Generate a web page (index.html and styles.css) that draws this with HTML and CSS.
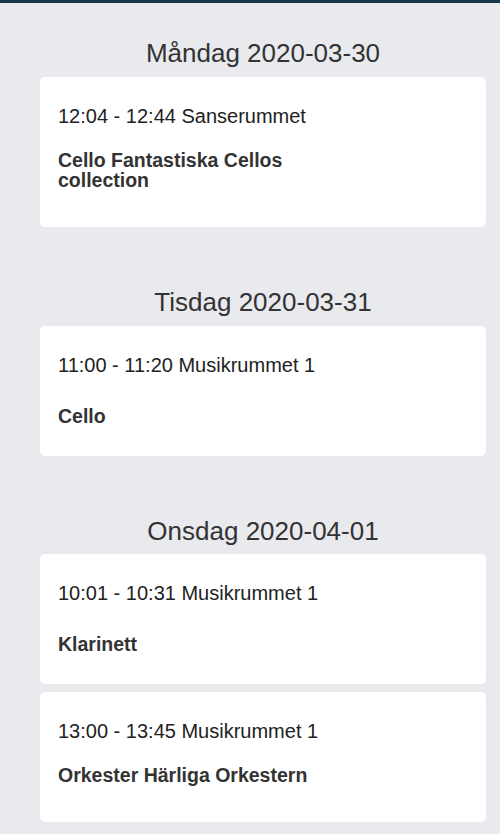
FILE: index.html
```html
<!DOCTYPE html>
<html lang="sv">
<head>
<meta charset="utf-8">
<title>Schema</title>
<link rel="stylesheet" href="styles.css">
</head>
<body>
<div class="topbar"></div>
<main class="schedule">
  <section class="day">
    <h2 class="day-title">Måndag 2020-03-30</h2>
    <div class="card">
      <div class="card-time">12:04 - 12:44 Sanserummet</div>
      <div class="card-title">Cello Fantastiska Cellos collection</div>
    </div>
  </section>
  <section class="day">
    <h2 class="day-title">Tisdag 2020-03-31</h2>
    <div class="card card--shift">
      <div class="card-time">11:00 - 11:20 Musikrummet 1</div>
      <div class="card-title">Cello</div>
    </div>
  </section>
  <section class="day">
    <h2 class="day-title day-title--tight">Onsdag 2020-04-01</h2>
    <div class="card card--shift">
      <div class="card-time">10:01 - 10:31 Musikrummet 1</div>
      <div class="card-title">Klarinett</div>
    </div>
    <div class="card">
      <div class="card-time">13:00 - 13:45 Musikrummet 1</div>
      <div class="card-title">Orkester Härliga Orkestern</div>
    </div>
  </section>
</main>
</body>
</html>
```
FILE: styles.css
```css
html, body {
  margin: 0;
  padding: 0;
}
body {
  background: #e9eaee;
  font-family: "Liberation Sans", Arial, Helvetica, sans-serif;
  color: #333;
}
.topbar {
  height: 3px;
  background: #173a4b;
}
.schedule {
  padding: 35px 14px 20px 40px;
  display: flex;
  flex-direction: column;
  gap: 60px;
}
.day {
  display: flex;
  flex-direction: column;
  gap: 8px;
}
.day-title {
  margin: 0 0 1px;
  font-size: 26px;
  line-height: 30px;
  font-weight: normal;
  text-align: center;
  color: #333;
}
.day-title--tight {
  margin-bottom: 0;
}
.card {
  background: #fff;
  border-radius: 5px;
  padding: 27px 18px 37px;
}
.card-time {
  font-size: 20px;
  line-height: 24px;
  color: #222;
}
.card-title {
  margin-top: 22px;
  font-size: 19.5px;
  line-height: 20px;
  font-weight: bold;
  color: #333;
  max-width: 270px;
}
.card--shift {
  padding-bottom: 30px;
}
.card--shift .card-title {
  margin-top: 29px;
}
```
